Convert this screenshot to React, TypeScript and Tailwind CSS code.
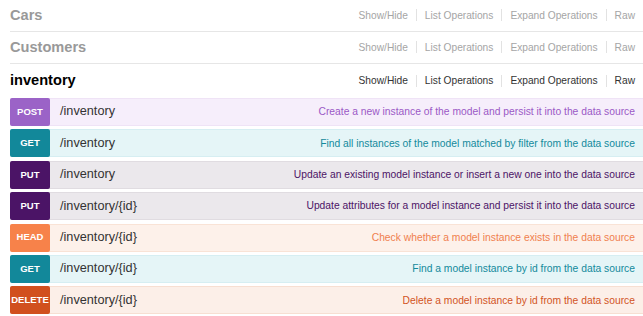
import React from 'react'

type Op = {
    method: string
    path: string
    summary: string
    badge: string
    row: string
    border: string
    text: string
}

const ops: Op[] = [
    { method: 'POST', path: '/inventory', summary: 'Create a new instance of the model and persist it into the data source', badge: 'bg-[#9b63c7]', row: 'bg-[#f6eefb]', border: 'border-[#efe3f6]', text: 'text-[#9b59c6]' },
    { method: 'GET', path: '/inventory', summary: 'Find all instances of the model matched by filter from the data source', badge: 'bg-[#12889a]', row: 'bg-[#e5f5f7]', border: 'border-[#d6eef2]', text: 'text-[#138a9c]' },
    { method: 'PUT', path: '/inventory', summary: 'Update an existing model instance or insert a new one into the data source', badge: 'bg-[#4b1466]', row: 'bg-[#ebe8ec]', border: 'border-[#e0dce1]', text: 'text-[#4b1466]' },
    { method: 'PUT', path: '/inventory/{id}', summary: 'Update attributes for a model instance and persist it into the data source', badge: 'bg-[#4b1466]', row: 'bg-[#ebe8ec]', border: 'border-[#e0dce1]', text: 'text-[#4b1466]' },
    { method: 'HEAD', path: '/inventory/{id}', summary: 'Check whether a model instance exists in the data source', badge: 'bg-[#f7824a]', row: 'bg-[#fdf1ea]', border: 'border-[#f9e3d6]', text: 'text-[#f0804e]' },
    { method: 'GET', path: '/inventory/{id}', summary: 'Find a model instance by id from the data source', badge: 'bg-[#12889a]', row: 'bg-[#e5f5f7]', border: 'border-[#d6eef2]', text: 'text-[#138a9c]' },
    { method: 'DELETE', path: '/inventory/{id}', summary: 'Delete a model instance by id from the data source', badge: 'bg-[#d1501e]', row: 'bg-[#fcefe8]', border: 'border-[#f7dfd2]', text: 'text-[#d2541f]' },
]

function ResourceHeader({ name, active, divider }: { name: string; active?: boolean; divider?: boolean }) {
    const links = ['Show/Hide', 'List Operations', 'Expand Operations', 'Raw']
    return (
        <div className={`flex items-center justify-between h-[32px] ${divider ? 'border-b border-[#e6e6e6]' : ''}`}>
            <h2 className={`text-[14.6px] font-bold ${active ? 'text-black' : 'text-[#999]'}`}>{name}</h2>
            <div className={`flex items-center text-[10.2px] pr-[8px] ${active ? 'text-[#333]' : 'text-[#a5a5a5]'}`}>
                {links.map((l, i) => (
                    <span key={l} className="flex items-center">
                        {i > 0 && <span className="mx-[8px] h-[12px] border-l border-[#e2e2e2]" />}
                        {l}
                    </span>
                ))}
            </div>
        </div>
    )
}

export default function App() {
    return (
        <div className="w-[643px] h-[316px] overflow-hidden bg-white pl-[10px] font-['Liberation_Sans',Arial,sans-serif]">
            <ResourceHeader name="Cars" divider />
            <ResourceHeader name="Customers" divider />
            <div className="mt-[1px]">
                <ResourceHeader name="inventory" active />
            </div>
            <div className="flex flex-col gap-[3.4px] mt-[1px] -mr-[4px]">
                {ops.map((op, i) => (
                    <div key={i} className={`flex items-center h-[28px] rounded-[2px] border ${op.row} ${op.border}`}>
                        <span className={`flex items-center justify-center w-[40px] h-[28px] -ml-px rounded-[2px] text-white text-[9.5px] font-bold ${op.badge}`}>
                            {op.method}
                        </span>
                        <span className="ml-[10px] text-[12.7px] text-[#333]">{op.path}</span>
                        <span className={`ml-auto pr-[11px] text-[10.3px] ${op.text}`}>{op.summary}</span>
                    </div>
                ))}
            </div>
        </div>
    )
}
